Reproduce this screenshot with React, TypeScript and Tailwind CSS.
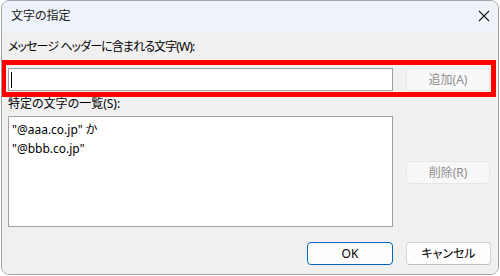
import React from "react";

const font = { fontFamily: '"Noto Sans", "Noto Sans CJK JP", sans-serif' };

const DisabledButton = ({ label }: { label: string }) => (
  <div className="w-[84px] h-[23px] rounded-[4px] border border-[#e6e6e6] bg-[#f8f8f8] flex items-center justify-center text-[12px] text-[#8e8e8e]">
    {label}
  </div>
);

const App = () => {
  return (
    <div className="w-[500px] h-[276px] bg-white [font-feature-settings:'palt']" style={font}>
      <div className="ml-[1px] w-[498px] h-[275px] rounded-[8px] border border-[#a3a3a3] overflow-hidden flex flex-col relative">
        {/* title bar */}
        <div className="h-[30px] bg-[#eef2f9] flex items-center justify-between pl-[9px] pr-[8px]">
          <span className="text-[12px] text-[#1a1a1a]">文字の指定</span>
          <svg width="12" height="12" viewBox="0 0 12 12">
            <path d="M1 1 L11 11 M11 1 L1 11" stroke="#1a1a1a" strokeWidth="1.1" />
          </svg>
        </div>

        {/* body */}
        <div className="flex-1 bg-[#f0f0f0] pl-[6px] pr-[7px] pt-[8px] text-[12px] text-[#000]">
          <div className="h-[16px] leading-[16px] tracking-[-0.9px]">メッセージ ヘッダーに含まれる文字(W):</div>

          <div className="mt-[13px] flex gap-[13px]">
            <div className="w-[385px] h-[23px] bg-white border border-[#a0a0a0] flex items-center pl-[2px]">
              <div className="w-[1px] h-[16px] bg-black" />
            </div>
            <DisabledButton label="追加(A)" />
          </div>

          <div className="mt-[5px] h-[16px] leading-[16px]">特定の文字の一覧(S):</div>

          <div className="mt-[4px] flex gap-[13px]">
            <div className="w-[385px] h-[111px] bg-white border border-[#a0a0a0] pl-[3px] pt-[3px] leading-[19px]">
              <div>"@aaa.co.jp" か</div>
              <div>"@bbb.co.jp"</div>
            </div>
            <div className="pt-[45px]">
              <DisabledButton label="削除(R)" />
            </div>
          </div>

          <div className="mt-[15px] flex justify-end gap-[13px]">
            <div className="w-[86px] h-[23px] rounded-[4px] border border-[#0067c0] bg-[#fdfdfd] flex items-center justify-center">
              OK
            </div>
            <div className="w-[85px] h-[23px] rounded-[4px] border border-[#d3d3d3] border-b-[#bdbdbd] bg-[#fdfdfd] flex items-center justify-center">
              キャンセル
            </div>
          </div>
        </div>

        {/* red annotation frame */}
        <div className="absolute left-[-1px] top-[59px] w-[495px] h-[37px] border-[5px] border-[#ff0000] pointer-events-none" />
      </div>
    </div>
  );
};

export default App;
